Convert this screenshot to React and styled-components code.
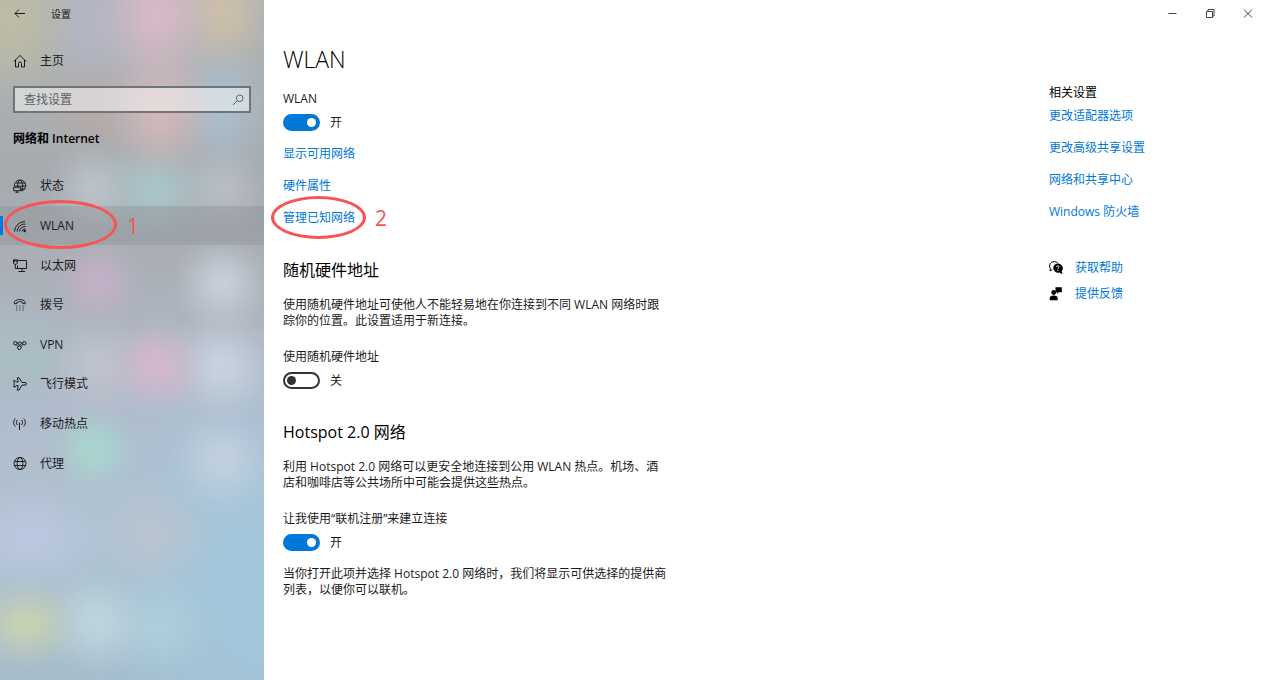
import React, { useState } from 'react';
import styled, { createGlobalStyle } from 'styled-components';

const GlobalStyle = createGlobalStyle`
  *, *::before, *::after { box-sizing: border-box; }
  body {
    margin: 0;
    background: #fff;
    color: #1b1b1b;
    font: 12px/16px "Open Sans", "Noto Sans CJK SC", sans-serif;
  }
  h1, h2, p, ul { margin: 0; padding: 0; }
  ul { list-style: none; }
  button, input { font: inherit; color: inherit; }
`;

const Window = styled.div`
  display: flex;
  min-height: 100vh;
`;

const glow = (x, y, rx, ry, color) =>
  `radial-gradient(ellipse ${rx}px ${ry}px at ${x}px ${y}px, ${color} 0, ${color}d0 25%, ${color}80 50%, ${color}30 75%, ${color}00 100%)`;

const acrylic = [
  glow(10, 20, 70, 90, '#bdbda4'),
  glow(158, 14, 62, 90, '#d8bac7'),
  glow(222, 12, 54, 66, '#cdbfa8'),
  glow(95, 24, 66, 80, '#b4b6c5'),
  glow(160, 112, 62, 72, '#d3b8ba'),
  glow(92, 108, 64, 54, '#b6a9a8'),
  glow(222, 106, 56, 76, '#a9bfce'),
  glow(155, 190, 62, 54, '#a9c6ca'),
  glow(94, 188, 50, 50, '#bcc2ca'),
  glow(222, 188, 50, 50, '#b9bec5'),
  glow(98, 282, 46, 46, '#c5b0c7'),
  glow(222, 284, 50, 52, '#c8cfd8'),
  glow(158, 366, 52, 52, '#d6b8cd'),
  glow(222, 366, 58, 58, '#c9d3df'),
  glow(98, 366, 52, 54, '#bfc3cc'),
  glow(20, 356, 80, 62, '#a9bdc4'),
  glow(94, 450, 46, 46, '#a8d6cf'),
  glow(222, 460, 56, 56, '#c1d0df'),
  glow(30, 538, 84, 60, '#bac8e0'),
  glow(150, 534, 68, 64, '#b9c3d0'),
  glow(26, 624, 60, 46, '#c8d2b2'),
  glow(97, 622, 56, 56, '#bfd5dd'),
  glow(160, 626, 56, 56, '#accfdb'),
  glow(264, 590, 220, 260, '#a2c7dd'),
  'linear-gradient(180deg, #b0b3b4 0, #a6abb0 26%, #abb0b8 40%, #b0bccc 60%, #b0c2d0 80%, #a6bcca 100%)',
].join(', ');

const Sidebar = styled.aside`
  flex: 0 0 264px;
  background: ${acrylic};
`;

const SideTitle = styled.div`
  display: flex;
  align-items: center;
  gap: 24px;
  height: 27px;
  padding-left: 11px;
  font-size: 10px;
`;

const IconButton = styled.button`
  display: flex;
  align-items: center;
  justify-content: center;
  width: ${(p) => p.$width}px;
  height: ${(p) => p.$height}px;
  padding: 0;
  border: 0;
  background: none;
`;

const HomeLink = styled.a`
  display: flex;
  align-items: center;
  gap: 13px;
  height: 38px;
  margin-top: 15px;
  padding-left: 13px;
  color: inherit;
  text-decoration: none;
`;

const SearchBox = styled.label`
  display: flex;
  align-items: center;
  height: 27px;
  margin: 6px 13px 0;
  padding: 0 4px 0 9px;
  border: 2px solid #71757a;
  background: rgba(255, 255, 255, 0.48);
  color: #5e6164;
`;

const SearchInput = styled.input`
  flex: 1;
  min-width: 0;
  padding: 0;
  border: 0;
  outline: 0;
  background: none;
  &::placeholder { color: #5e6164; opacity: 1; }
`;

const SideHeading = styled.h2`
  margin: 18px 13px 0;
  color: #000;
  font-size: 12px;
  line-height: 16px;
  font-weight: 600;
`;

const NavList = styled.ul`
  display: grid;
  grid-auto-rows: 1fr;
  height: 317px;
  margin-top: 19px;
`;

const NavItem = styled.li`
  position: relative;
  display: flex;
`;

const NavLink = styled.a`
  flex: 1;
  display: flex;
  align-items: center;
  gap: 13px;
  padding: 1px 0 0 13px;
  color: inherit;
  text-decoration: none;
  background: ${(p) => (p.$active ? 'rgba(124, 128, 130, 0.26)' : 'none')};
  &::before {
    content: ${(p) => (p.$active ? '""' : 'none')};
    position: absolute;
    left: 0;
    width: 3px;
    height: 19px;
    background: #0078d7;
  }
`;

const Ring = styled.span`
  position: absolute;
  top: ${(p) => p.$top}px;
  left: ${(p) => p.$left}px;
  width: ${(p) => p.$width}px;
  height: ${(p) => p.$height}px;
  border: 3px solid #f95454;
  border-radius: 50%;
  pointer-events: none;
`;

const Step = styled.span`
  position: absolute;
  top: ${(p) => p.$top}px;
  left: ${(p) => p.$left}px;
  color: #f95454;
  font-size: 21px;
  line-height: 24px;
  pointer-events: none;
`;

const Page = styled.div`
  flex: 1;
  min-width: 0;
`;

const WindowControls = styled.div`
  display: flex;
  justify-content: flex-end;
  height: 27px;
  color: #444;
`;

const Columns = styled.div`
  display: flex;
  justify-content: space-between;
`;

const Main = styled.main`
  padding: 16px 0 40px 19px;
`;

const PageTitle = styled.h1`
  font-size: 23px;
  line-height: 32px;
  font-weight: 300;
  color: #000;
`;

const Section = styled.section`
  margin-top: ${(p) => p.$gap}px;
`;

const SectionTitle = styled.h2`
  margin-bottom: 15px;
  color: #000;
  font-size: 16px;
  line-height: 24px;
  font-weight: 400;
`;

const Field = styled.div`
  margin-top: ${(p) => (p.$spaced ? 20 : 0)}px;
`;

const FieldLabel = styled.label`
  display: block;
`;

const SwitchRow = styled.div`
  display: flex;
  align-items: center;
  gap: 10px;
  height: 19px;
  margin: 6px 0 14px;
`;

const Switch = styled.input`
  appearance: none;
  display: flex;
  align-items: center;
  width: 37px;
  height: 17px;
  margin: 0;
  padding: 0 2px;
  border: 2px solid #333;
  border-radius: 9px;
  background: #fff;
  &::before {
    content: "";
    width: 9px;
    height: 9px;
    border-radius: 50%;
    background: #333;
  }
  &:checked {
    justify-content: flex-end;
    border-color: #0078d7;
    background: #0078d7;
  }
  &:checked::before { background: #fff; }
`;

const LinkStack = styled.ul`
  display: grid;
  gap: 16px;
  justify-items: start;
`;

const LinkItem = styled.li`
  position: relative;
  white-space: nowrap;
`;

const TextLink = styled.a`
  color: #0078d7;
  text-decoration: none;
`;

const Related = styled.aside`
  flex: 0 0 218px;
  padding-top: 58px;
`;

const RelatedTitle = styled.h2`
  margin-bottom: 7px;
  font-size: 12px;
  line-height: 16px;
  font-weight: 400;
  color: #000;
`;

const HelpList = styled.ul`
  display: grid;
  gap: 10px;
  margin-top: 40px;
  color: #000;
`;

const HelpItem = styled.li`
  display: flex;
  align-items: center;
  gap: 12px;
`;

const Icon = ({ children, size = 14 }) => (
  <svg
    width={size}
    height={size}
    viewBox="0 0 14 14"
    fill="none"
    stroke="currentColor"
    strokeWidth="1"
    aria-hidden="true"
  >
    {children}
  </svg>
);

const icons = {
  back: <path d="M13 6.500H3M7 2.500l-4 4 4 4" />,
  home: <path d="M.8 7.500 7 1.500l6.200 6M2.500 6v7h3V9.500a1.500 1.500 0 0 1 3 0V13h3V6" />,
  search: (
    <>
      <circle cx="8.700" cy="5.300" r="3.300" />
      <path d="M6.300 7.700 2 12" />
    </>
  ),
  status: (
    <>
      <path d="M1.300 7C1.200 3.500 4 1 7.300 1c3.200 0 5.500 2.500 5.500 5.500 0 3-2 5.200-5 5.300M2.500 4h9.700M1.500 7.200h11.300M8 10h4M7 1C5 3 4.500 5 4.500 7.500M7.500 1c2.500 2.500 3 7 .7 10.700" />
      <path d="M.7 8.200h6.600v3.600H.7zM2.500 13.300h3M4 12v1.300" />
    </>
  ),
  wlan: (
    <>
      <path d="M1.500 12.500A10.500 10.500 0 0 1 12 2.500M4 12.500A8 8 0 0 1 12.500 5M6.500 12.500a5.500 5.500 0 0 1 6-5M9 12.500A3.300 3.300 0 0 1 12.500 10" />
      <circle cx="11.700" cy="12" r="1.200" fill="currentColor" stroke="none" />
    </>
  ),
  ethernet: (
    <>
      <path d="M5 1.500h8.500v8H4.500V6.500M9 9.500v3M5.500 12.500H12M2.300 5.500v4H4.500" />
      <path d="M.5.800h3.800v3.200l-1 1.300H1.500l-1-1.300zM1.700 1v2M3.200 1v2" />
    </>
  ),
  dialup: (
    <>
      <path d="M1.500 5.800C.3 3.300 3.500 1.500 6.700 1.500s6.400 1.800 5.300 4.300L9.700 5.500V4.300C8 3.400 5.700 3.400 3.900 4.300v1.200z" />
      <path d="M3.200 8h7.500M3.200 10h7.500M3.200 12h7.500" strokeDasharray="1 2.200" />
    </>
  ),
  vpn: (
    <>
      <circle cx="2.300" cy="5.200" r="1.700" />
      <circle cx="6.700" cy="5.500" r="1.500" />
      <circle cx="11.300" cy="5.200" r="1.700" />
      <circle cx="6.300" cy="9.700" r="1.800" />
      <path d="m3.300 6.700 1.700 1.700M10.200 6.500 7.700 8.700M4 5.200h1.200M8.200 5.200h1.500" />
    </>
  ),
  airplane: (
    <path d="M5.200 5 4.300.8h1.800L9 5.500h3c1.900 0 1.900 2.600 0 2.600H9l-2.900 5H4.300L5.200 8.500H3.300L2.200 10H.7l.6-3.200L.7 3.700h1.500L3.300 5z" />
  ),
  hotspot: (
    <>
      <path d="M2.400 1.500c-2.300 2.400-2.300 5.600 0 8M4.400 3c-1.300 1.500-1.300 3.500 0 5M10.600 1.500c2.300 2.400 2.300 5.600 0 8M8.600 3c1.300 1.500 1.300 3.500 0 5M6.500 5.500V13" />
    </>
  ),
  proxy: (
    <>
      <circle cx="7" cy="6.500" r="6" />
      <ellipse cx="7" cy="6.500" rx="2.800" ry="6" />
      <path d="M1.500 4.500h11M1.500 8.500h11" />
    </>
  ),
  help: (
    <>
      <path d="M3.300 8.500 1 10l.4-2.300C-.5 4 1.500.7 5 .7c1.600 0 3 .5 4 1.600" />
      <path
        d="M8.800 2.400a4.700 4.700 0 1 0 1.500 9.200l3.300 1.700-.9-3.200a4.700 4.700 0 0 0-3.900-7.700z"
        fill="currentColor"
        stroke="none"
      />
      <path d="M7.500 6c0-1.600 2.800-1.500 2.500.1-.1.800-1.200.8-1.200 2M8.800 9v1" stroke="#fff" />
    </>
  ),
  feedback: (
    <g fill="currentColor" stroke="none">
      <path d="M6.500.2h6.300v5H9.600L8 6.900V5.200H6.500z" />
      <circle cx="4.700" cy="5.500" r="2.400" />
      <path d="M.8 13.300v-2C.8 9.500 2 8.500 4.700 8.500s4 1 4 2.800v2z" />
    </g>
  ),
  minimize: <path d="M3.500 6.500h8" />,
  restore: <path d="M3.500 4.500h6v6h-6zM5 4.500v-2h6V9H9.500" />,
  close: <path d="m3 2.500 8 8M11 2.500l-8 8" />,
};

const navItems = [
  ['status', '状态'],
  ['wlan', 'WLAN'],
  ['ethernet', '以太网'],
  ['dialup', '拨号'],
  ['vpn', 'VPN'],
  ['airplane', '飞行模式'],
  ['hotspot', '移动热点'],
  ['proxy', '代理'],
];

const relatedLinks = ['更改适配器选项', '更改高级共享设置', '网络和共享中心', 'Windows 防火墙'];

const windowButtons = [
  ['minimize', '最小化'],
  ['restore', '还原'],
  ['close', '关闭'],
];

function ToggleField({ id, label, initial, spaced }) {
  const [on, setOn] = useState(initial);
  return (
    <Field $spaced={spaced}>
      <FieldLabel htmlFor={id}>{label}</FieldLabel>
      <SwitchRow>
        <Switch
          id={id}
          type="checkbox"
          role="switch"
          checked={on}
          onChange={(e) => setOn(e.target.checked)}
        />
        <span>{on ? '开' : '关'}</span>
      </SwitchRow>
    </Field>
  );
}

export default function App() {
  return (
    <>
      <GlobalStyle />
      <Window>
        <Sidebar>
          <SideTitle>
            <IconButton $width={16} $height={27} aria-label="返回">
              <Icon>{icons.back}</Icon>
            </IconButton>
            <span>设置</span>
          </SideTitle>
          <HomeLink href="#home">
            <Icon>{icons.home}</Icon>
            <span>主页</span>
          </HomeLink>
          <SearchBox>
            <SearchInput type="text" placeholder="查找设置" aria-label="查找设置" />
            <Icon>{icons.search}</Icon>
          </SearchBox>
          <SideHeading>网络和 Internet</SideHeading>
          <nav>
            <NavList>
              {navItems.map(([name, label]) => (
                <NavItem key={name}>
                  <NavLink href={`#${name}`} $active={name === 'wlan'}>
                    <Icon>{icons[name]}</Icon>
                    <span>{label}</span>
                  </NavLink>
                  {name === 'wlan' && (
                    <>
                      <Ring $top={-6} $left={4} $width={113} $height={49} />
                      <Step $top={8} $left={127}>1</Step>
                    </>
                  )}
                </NavItem>
              ))}
            </NavList>
          </nav>
        </Sidebar>
        <Page>
          <WindowControls>
            {windowButtons.map(([name, label]) => (
              <IconButton key={name} $width={38} $height={27} aria-label={label}>
                <Icon>{icons[name]}</Icon>
              </IconButton>
            ))}
          </WindowControls>
          <Columns>
            <Main>
              <PageTitle>WLAN</PageTitle>
              <Section $gap={16}>
                <ToggleField id="wlan-switch" label="WLAN" initial />
                <LinkStack>
                  <LinkItem><TextLink href="#available">显示可用网络</TextLink></LinkItem>
                  <LinkItem><TextLink href="#hardware">硬件属性</TextLink></LinkItem>
                  <LinkItem>
                    <TextLink href="#known">管理已知网络</TextLink>
                    <Ring $top={-14} $left={-12} $width={95} $height={43} />
                    <Step $top={-4} $left={92}>2</Step>
                  </LinkItem>
                </LinkStack>
              </Section>
              <Section $gap={32}>
                <SectionTitle>随机硬件地址</SectionTitle>
                <p>
                  使用随机硬件地址可使他人不能轻易地在你连接到不同 WLAN 网络时跟
                  <br />
                  踪你的位置。此设置适用于新连接。
                </p>
                <ToggleField id="random-switch" label="使用随机硬件地址" initial={false} spaced />
              </Section>
              <Section $gap={30}>
                <SectionTitle>Hotspot 2.0 网络</SectionTitle>
                <p>
                  利用 Hotspot 2.0 网络可以更安全地连接到公用 WLAN 热点。机场、酒
                  <br />
                  店和咖啡店等公共场所中可能会提供这些热点。
                </p>
                <ToggleField id="hotspot-switch" label="让我使用“联机注册”来建立连接" initial spaced />
                <p>
                  当你打开此项并选择 Hotspot 2.0 网络时，我们将显示可供选择的提供商
                  <br />
                  列表，以便你可以联机。
                </p>
              </Section>
            </Main>
            <Related>
              <RelatedTitle>相关设置</RelatedTitle>
              <LinkStack>
                {relatedLinks.map((text) => (
                  <LinkItem key={text}><TextLink href="#related">{text}</TextLink></LinkItem>
                ))}
              </LinkStack>
              <HelpList>
                <HelpItem>
                  <Icon>{icons.help}</Icon>
                  <TextLink href="#help">获取帮助</TextLink>
                </HelpItem>
                <HelpItem>
                  <Icon>{icons.feedback}</Icon>
                  <TextLink href="#feedback">提供反馈</TextLink>
                </HelpItem>
              </HelpList>
            </Related>
          </Columns>
        </Page>
      </Window>
    </>
  );
}
